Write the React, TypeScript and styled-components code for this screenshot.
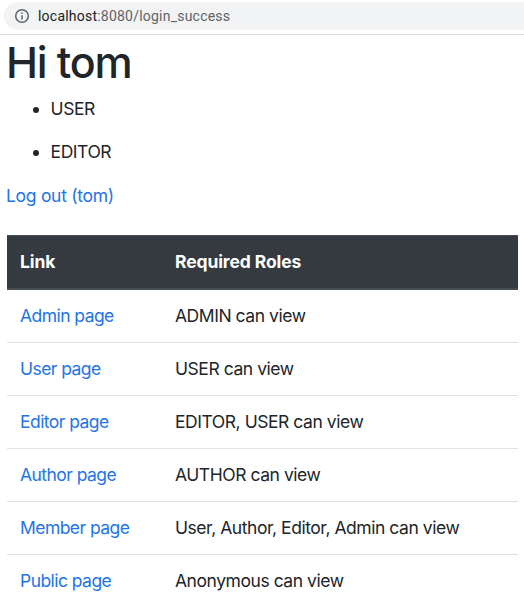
import React from "react";
import styled, { createGlobalStyle } from "styled-components";

const Global = createGlobalStyle`
  * { box-sizing: border-box; }
  html, body { margin: 0; background: #fff; overflow: hidden; }
  body {
    font-family: Inter, "Liberation Sans", sans-serif;
    color: #212529;
    font-size: 17.5px;
    letter-spacing: -0.45px;
  }
`;
const Page = styled.div`
  width: 524px;
  height: 604px;
  overflow: hidden;
  background: #fff;
`;
const BrowserBar = styled.header`
  height: 35px;
  padding: 2px 0 0 4px;
  border-bottom: 1px solid #d9dadb;
`;
const AddressField = styled.div`
  height: 28px;
  padding-left: 10px;
  display: flex;
  align-items: center;
  gap: 8px;
  background: #f1f3f4;
  border-radius: 14px 0 0 14px;
  font: 14px/20px Roboto, sans-serif;
  letter-spacing: 0.22px;
  color: #5f6368;
`;
const Host = styled.span`
  color: #202124;
`;
const Content = styled.main`
  padding: 0 6px 0 7px;
`;
const Title = styled.h1`
  margin: 0 0 0 -1px;
  height: 62px;
  font-size: 43px;
  line-height: 55px;
  font-weight: 500;
  letter-spacing: -1.2px;
`;
const Roles = styled.ul`
  margin: 0;
  padding-left: 43.6px;
`;
const Role = styled.li`
  height: 43px;
  line-height: 24px;
`;
const Link = styled.a`
  color: #2374e6;
  text-decoration: none;
`;
const Logout = styled.p`
  margin: 0 0 0 -1px;
  height: 52px;
  line-height: 26px;
  letter-spacing: -0.29px;
`;
const Table = styled.table`
  width: 100%;
  border-collapse: separate;
  border-spacing: 0;
  table-layout: fixed;
`;
const HeadCell = styled.th<{ $width?: number }>`
  width: ${(p) => (p.$width ? `${p.$width}px` : "auto")};
  height: 55px;
  padding: 0 0 1px 13px;
  background: #343a40;
  border-top: 1px solid #454d55;
  border-bottom: 2px solid #454d55;
  color: #fff;
  text-align: left;
  font-weight: 700;
  letter-spacing: -0.1px;
`;
const Cell = styled.td`
  height: 53px;
  padding: 0 0 2px 13px;
  border-bottom: 1px solid #dee2e6;

  &:first-child {
    letter-spacing: -0.55px;
  }
`;

const rows = [
  ["Admin page", "ADMIN can view"],
  ["User page", "USER can view"],
  ["Editor page", "EDITOR, USER can view"],
  ["Author page", "AUTHOR can view"],
  ["Member page", "User, Author, Editor, Admin can view"],
  ["Public page", "Anonymous can view"],
];

export default function App() {
  return (
    <Page>
      <Global />
      <BrowserBar>
        <AddressField>
          <svg width="16" height="16" viewBox="0 0 16 16" fill="none" stroke="#5f6368" strokeWidth="1.5">
            <circle cx="8" cy="8" r="6.3" />
            <path d="M8 7.2v4.2M8 4.5v1.6" />
          </svg>
          <span><Host>localhost</Host>:8080/login_success</span>
        </AddressField>
      </BrowserBar>
      <Content>
        <Title>Hi tom</Title>
        <Roles>
          <Role>USER</Role>
          <Role>EDITOR</Role>
        </Roles>
        <Logout><Link>Log out (tom)</Link></Logout>
        <Table>
          <thead>
            <tr>
              <HeadCell $width={155}>Link</HeadCell>
              <HeadCell>Required Roles</HeadCell>
            </tr>
          </thead>
          <tbody>
            {rows.map(([page, access]) => (
              <tr key={page}>
                <Cell><Link>{page}</Link></Cell>
                <Cell>{access}</Cell>
              </tr>
            ))}
          </tbody>
        </Table>
      </Content>
    </Page>
  );
}
